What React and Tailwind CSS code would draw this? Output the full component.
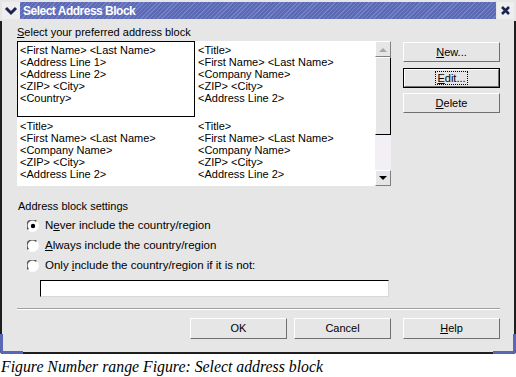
const items = [
  ["<First Name> <Last Name>", "<Address Line 1>", "<Address Line 2>", "<ZIP> <City>", "<Country>"],
  ["<Title>", "<First Name> <Last Name>", "<Company Name>", "<ZIP> <City>", "<Address Line 2>"],
  ["<Title>", "<First Name> <Last Name>", "<Company Name>", "<ZIP> <City>", "<Address Line 2>"],
  ["<Title>", "<First Name> <Last Name>", "<Company Name>", "<ZIP> <City>", "<Address Line 2>"],
];

function Btn({ children, focused, className = "" }) {
  return (
    <div className={`${focused ? "border border-black" : ""} ${className}`}>
      <div className="h-full flex items-center justify-center bg-[#e6e6e6] border border-t-white border-l-white border-b-[#707070] border-r-[#707070]">
        {focused ? (
          <span className="border border-dotted border-black px-[1px] leading-[12px]">{children}</span>
        ) : (
          children
        )}
      </div>
    </div>
  );
}

function Radio({ checked, children }) {
  return (
    <div className="h-[20px] flex items-center pl-[10px]">
      <svg width="12" height="12" viewBox="0 0 12 12" className="mr-[6px]">
        <circle cx="6" cy="6" r="5" fill="#ffffff" />
        <path d="M1.5 9.5 A5 5 0 0 1 9.5 1.5" fill="none" stroke="#555" strokeWidth="1.5" />
        <path d="M9.5 1.5 A5 5 0 0 1 1.5 9.5" fill="none" stroke="#ffffff" strokeWidth="1.5" />
        {checked && <circle cx="6" cy="6" r="2.2" fill="#000" />}
      </svg>
      <span>{children}</span>
    </div>
  );
}

export default function App() {
  return (
    <div className="w-[516px] h-[377px] bg-white font-['Liberation_Sans',Arial,sans-serif] text-[11px] text-black">
      <div className="relative w-[516px]">
        {/* title bar */}
        <div className="h-[21px] bg-[#e6e6e6] flex pt-[2px] pl-[2px] pr-[2px]">
          <div className="w-[18px] h-[17px] flex items-center justify-center bg-[#eeeeee]">
            <svg width="14" height="10" viewBox="0 0 14 10">
              <path d="M2 2 L7 7 L12 2" fill="none" stroke="#1b2452" strokeWidth="3" />
            </svg>
          </div>
          <div className="flex-1 h-[17px] flex items-center pl-[3px] text-white font-bold text-[12px] tracking-[-0.5px] bg-[repeating-linear-gradient(-45deg,#5c69b5_0px,#5c69b5_2px,#7582c8_2px,#7582c8_3px)]">
            Select Address Block
          </div>
          <div className="w-[17px] h-[17px] ml-[1px] flex items-center justify-center bg-[#eeeeee]">
            <svg width="11" height="11" viewBox="0 0 11 11">
              <path d="M2 2 L9 9 M9 2 L2 9" fill="none" stroke="#1b2452" strokeWidth="2.6" />
            </svg>
          </div>
        </div>

        {/* body */}
        <div className="bg-[#e6e6e6] border-x-2 border-b-2 border-[#1e1e1e] pl-[15px] pr-[14px] pt-[5px] pb-[13px] rounded-b-[3px]">
          <div className="leading-[13px]">
            <span className="underline">S</span>elect your preferred address block
          </div>
          <div className="flex mt-[2px]">
            <div className="flex h-[145px] w-[374px]">
              <div className="flex-1 bg-white overflow-hidden grid grid-cols-[178px_178px] auto-rows-[76px] content-start">
                {items.map((lines, i) => (
                  <div
                    key={i}
                    className={`pl-[2px] pt-[2px] leading-[12px] border ${i === 0 ? "border-black" : "border-transparent"}`}
                  >
                    {lines.map((l, j) => (
                      <div key={j}>{l}</div>
                    ))}
                  </div>
                ))}
              </div>
              <div className="w-[16px] flex flex-col bg-[#f2f0f5]">
                <div className="h-[16px] flex items-center justify-center bg-[#e6e6e6] border border-t-white border-l-white border-b-[#808080] border-r-[#808080]">
                  <svg width="8" height="5" viewBox="0 0 8 5">
                    <path d="M0 5 L4 1 L8 5 Z" fill="#a8a8a8" />
                  </svg>
                </div>
                <div className="h-[78px] bg-[#e6e6e6] border border-t-white border-l-white border-b-black border-r-black" />
                <div className="flex-1" />
                <div className="h-[16px] flex items-center justify-center bg-[#e6e6e6] border border-t-white border-l-white border-b-[#808080] border-r-[#808080]">
                  <svg width="8" height="5" viewBox="0 0 8 5">
                    <path d="M0 0 L4 4 L8 0 Z" fill="#000" />
                  </svg>
                </div>
              </div>
            </div>
            <div className="ml-[12px] w-[97px] flex flex-col">
              <Btn className="h-[20px] mt-[1px]">
                <span><span className="underline">N</span>ew...</span>
              </Btn>
              <Btn focused className="h-[20px] mt-[6px]">
                <span className="underline">E</span>dit...
              </Btn>
              <Btn className="h-[20px] mt-[5px]">
                <span><span className="underline">D</span>elete</span>
              </Btn>
            </div>
          </div>

          <div className="mt-[14px] leading-[13px] pl-[1px]">Address block settings</div>
          <div className="mt-[3px] text-[11.5px]">
            <Radio checked>
              N<span className="underline">e</span>ver include the country/region
            </Radio>
            <Radio>
              <span className="underline">A</span>lways include the country/region
            </Radio>
            <Radio>
              Only <span className="underline">i</span>nclude the country/region if it is not:
            </Radio>
          </div>
          <div className="mt-[4px] ml-[23px] w-[349px] h-[17px] bg-white border border-t-black border-l-black border-b-[#d8d8d8] border-r-[#d8d8d8]" />

          <div className="mt-[11px] border-t border-t-[#a0a0a0] border-b border-b-white" />

          <div className="mt-[8px] flex justify-end">
            <Btn className="w-[97px] h-[21px]">OK</Btn>
            <Btn className="w-[97px] h-[21px] ml-[7px]">Cancel</Btn>
            <Btn className="w-[97px] h-[21px] ml-[12px]">
              <span><span className="underline">H</span>elp</span>
            </Btn>
          </div>
        </div>

        <div className="absolute left-0 bottom-0 w-[23px] h-[20px] border-l-[3px] border-b-[3px] border-[#5a67b4] rounded-bl-[4px]" />
        <div className="absolute right-0 bottom-0 w-[23px] h-[20px] border-r-[3px] border-b-[3px] border-[#5a67b4] rounded-br-[4px]" />
      </div>

      <div className="mt-[4px] pl-[1px] font-['Liberation_Serif','Times_New_Roman',serif] italic text-[15.8px] leading-[18px]">
        Figure Number range Figure: Select address block
      </div>
    </div>
  );
}
